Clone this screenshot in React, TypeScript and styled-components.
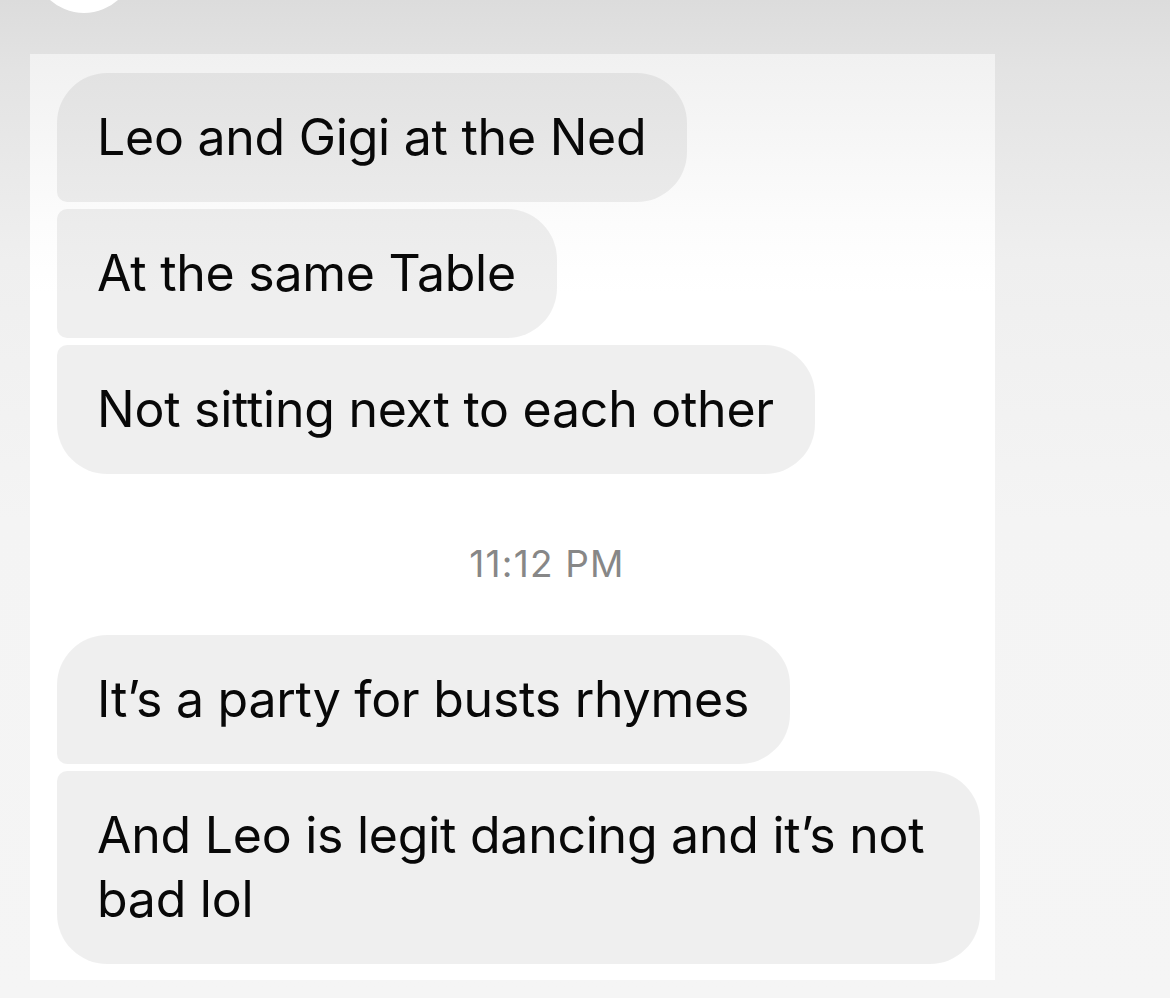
import styled, { createGlobalStyle } from 'styled-components';

const GlobalStyle = createGlobalStyle`
  html, body {
    margin: 0;
    padding: 0;
  }
  body {
    width: 1170px;
    height: 998px;
    overflow: hidden;
    font-family: Inter, "Liberation Sans", Arial, sans-serif;
    background: linear-gradient(
      to bottom,
      #dcdcdc 0px,
      #e3e3e3 70px,
      #efefef 260px,
      #f4f4f4 520px,
      #f5f5f5 100%
    );
  }
`;

type Corner = 'top' | 'middle' | 'bottom' | 'single';

type Message = {
  text: string;
  corner: Corner;
};

const firstGroup: Message[] = [
  { text: 'Leo and Gigi at the Ned', corner: 'top' },
  { text: 'At the same Table', corner: 'middle' },
  { text: 'Not sitting next to each other', corner: 'bottom' },
];

const secondGroup: Message[] = [
  { text: 'It’s a party for busts rhymes', corner: 'top' },
  { text: 'And Leo is legit dancing and it’s not bad lol', corner: 'bottom' },
];

const BIG = 50;
const SMALL = 10;

// the left edge of a run of bubbles only rounds fully at its ends
const bubbleRadius = (corner: Corner) => {
  switch (corner) {
    case 'top':
      return `${BIG}px ${BIG}px ${BIG}px ${SMALL}px`;
    case 'middle':
      return `${SMALL}px ${BIG}px ${BIG}px ${SMALL}px`;
    case 'bottom':
      return `${SMALL}px ${BIG}px ${BIG}px ${BIG}px`;
    default:
      return `${BIG}px`;
  }
};

const App = () => {
  return (
    <Screen>
      <GlobalStyle />
      <Header>
        <Avatar />
      </Header>
      <Thread>
        <Group>
          {firstGroup.map((m, key) => (
            <Bubble key={key} $corner={m.corner}>
              {m.text}
            </Bubble>
          ))}
        </Group>
        <Timestamp>11:12 PM</Timestamp>
        <Group>
          {secondGroup.map((m, key) => (
            <Bubble key={key} $corner={m.corner}>
              {m.text}
            </Bubble>
          ))}
        </Group>
      </Thread>
    </Screen>
  );
};

const Screen = styled.div`
  width: 1170px;
  height: 998px;
  display: flex;
  flex-direction: column;
`;

const Header = styled.div`
  height: 54px;
  flex-shrink: 0;
  padding-left: 33px;
  display: flex;
  align-items: flex-start;
`;

const Avatar = styled.div`
  width: 102px;
  height: 102px;
  margin-top: -89px;
  border-radius: 50%;
  background: #ffffff;
`;

const Thread = styled.div`
  margin-left: 30px;
  width: 965px;
  height: 926px;
  box-sizing: border-box;
  padding: 19px 15px 0 27px;
  background: linear-gradient(
    to bottom,
    #f1f1f1 0px,
    #f6f6f6 80px,
    #fcfcfc 170px,
    #ffffff 240px
  );
  display: flex;
  flex-direction: column;
`;

const Group = styled.div`
  display: flex;
  flex-direction: column;
  align-items: flex-start;
  gap: 7px;
`;

const Bubble = styled.div<{ $corner: Corner }>`
  box-sizing: border-box;
  max-width: 923px;
  padding: 32px 41px 33px 40px;
  border-radius: ${({ $corner }) => bubbleRadius($corner)};
  background: rgba(0, 0, 0, 0.064);
  color: #080808;
  font-size: 50px;
  line-height: 64px;
  letter-spacing: -0.25px;
`;

const Timestamp = styled.div`
  margin: 68px 0 49px;
  padding-left: 57px;
  text-align: center;
  font-size: 37px;
  line-height: 44px;
  letter-spacing: 1.2px;
  color: #878787;
`;

export default App;
